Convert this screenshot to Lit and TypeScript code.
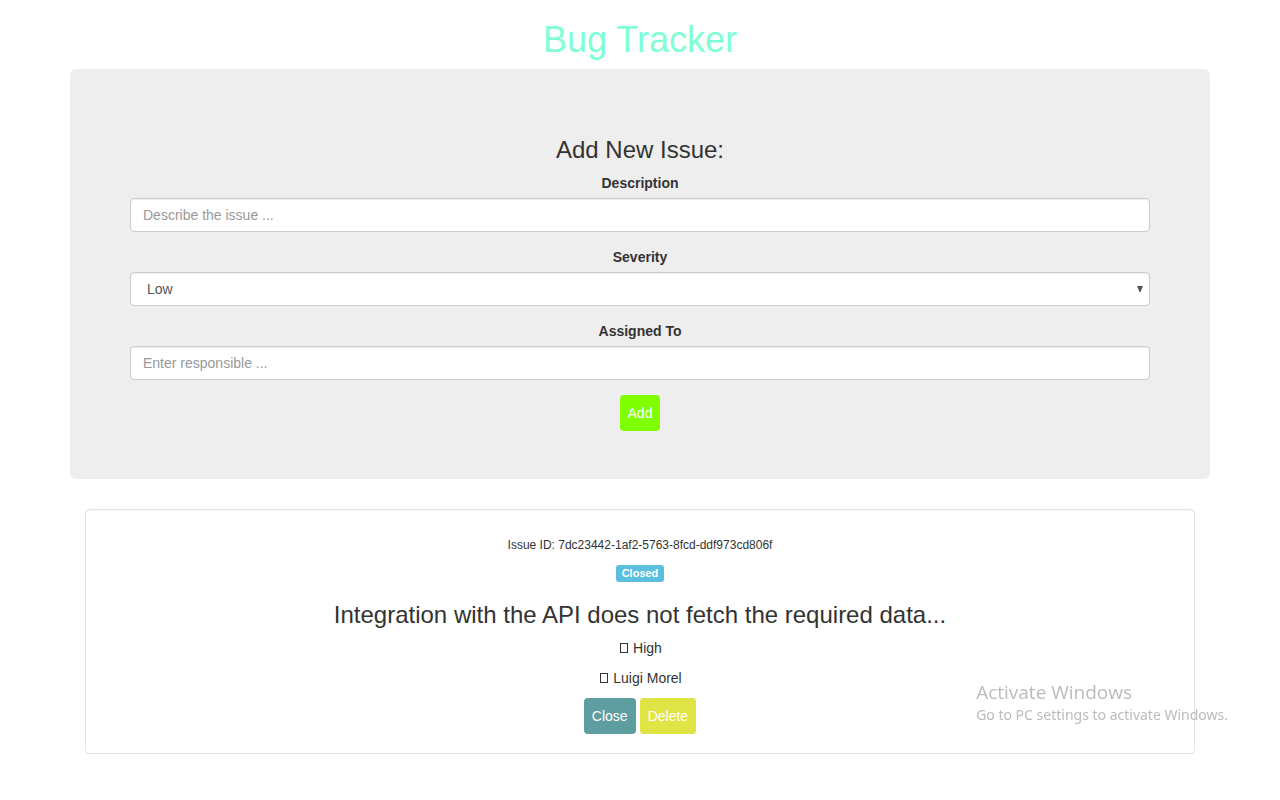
import { LitElement, html, css } from "lit";
import { customElement, property, state } from "lit/decorators.js";

interface Issue {
  id: string;
  description: string;
  severity: string;
  assignedTo: string;
  status: string;
}

const shared = css`
  :host {
    display: block;
  }
  * {
    box-sizing: border-box;
  }
  .btn {
    display: inline-block;
    padding: 7px;
    border: 1px solid transparent;
    border-radius: 4px;
    font-family: inherit;
    font-size: 14px;
    line-height: 20px;
    color: #fff;
    cursor: pointer;
  }
  .heading {
    margin: 20px 0 10px;
    font-size: 24px;
    font-weight: 400;
    line-height: 26px;
  }
`;

@customElement("issue-form")
export class IssueForm extends LitElement {
  static styles = [
    shared,
    css`
      .panel {
        margin-bottom: 30px;
        padding: 48px 60px;
        border-radius: 6px;
        background: #eee;
        display: flow-root;
      }
      .group {
        margin-bottom: 15px;
      }
      .label {
        display: block;
        margin-bottom: 5px;
        font-weight: 700;
      }
      .control {
        display: block;
        width: 100%;
        height: 34px;
        padding: 6px 12px;
        border: 1px solid #ccc;
        border-radius: 4px;
        background: #fff;
        box-shadow: inset 0 1px 1px rgba(0, 0, 0, 0.075);
        color: #555;
        font-family: inherit;
        font-size: 14px;
        line-height: 20px;
      }
      .control::placeholder {
        color: #999;
        opacity: 1;
      }
      .select-wrap {
        position: relative;
      }
      .select {
        appearance: none;
        padding-left: 16px;
      }
      .arrow {
        position: absolute;
        top: 14px;
        right: 7px;
        pointer-events: none;
      }
      .add {
        background: chartreuse;
      }
      .actions {
        display: flex;
        justify-content: center;
      }
    `,
  ];

  private submit(e: Event) {
    e.preventDefault();
    const form = e.target as HTMLFormElement;
    const data = new FormData(form);
    this.dispatchEvent(
      new CustomEvent("add-issue", {
        detail: {
          description: data.get("description"),
          severity: data.get("severity"),
          assignedTo: data.get("assignedTo"),
        },
      })
    );
    form.reset();
  }

  render() {
    return html`
      <section class="panel">
        <h3 class="heading">Add New Issue:</h3>
        <form @submit=${this.submit}>
          <div class="group">
            <label class="label" for="description">Description</label>
            <input class="control" id="description" name="description" type="text" placeholder="Describe the issue ..." />
          </div>
          <div class="group">
            <label class="label" for="severity">Severity</label>
            <div class="select-wrap">
              <select class="control select" id="severity" name="severity">
                <option>Low</option>
                <option>Medium</option>
                <option>High</option>
              </select>
              <svg class="arrow" width="6" height="6" viewBox="0 0 6 6" aria-hidden="true">
                <path d="M0 0H6L3.5 6H2.5Z" fill="#555" />
              </svg>
            </div>
          </div>
          <div class="group">
            <label class="label" for="assigned">Assigned To</label>
            <input class="control" id="assigned" name="assignedTo" type="text" placeholder="Enter responsible ..." />
          </div>
          <div class="actions"><button class="btn add" type="submit">Add</button></div>
        </form>
      </section>
    `;
  }
}

@customElement("issue-card")
export class IssueCard extends LitElement {
  @property({ attribute: false }) issue!: Issue;

  static styles = [
    shared,
    css`
      .card {
        display: flow-root;
        margin-bottom: 20px;
        padding: 19px;
        border: 1px solid #e3e3e3;
        border-radius: 4px;
        box-shadow: inset 0 1px 1px rgba(0, 0, 0, 0.05);
      }
      .id {
        margin: 10px 0;
        font-size: 12px;
        font-weight: 400;
        line-height: 13px;
      }
      .line {
        display: flex;
        justify-content: center;
        align-items: center;
        height: 20px;
        margin: 0 0 10px;
        gap: 5px;
      }
      .badge-line {
        align-items: flex-end;
      }
      .status {
        padding: 3px 6px;
        border-radius: 3px;
        background: #5bc0de;
        color: #fff;
        font-size: 11px;
        font-weight: 700;
        line-height: 11px;
      }
      .actions {
        display: flex;
        justify-content: center;
        gap: 4px;
      }
      .close {
        background: cadetblue;
      }
      .delete {
        background: #e0e444;
      }
    `,
  ];

  private glyph() {
    return html`<svg width="10" height="10" viewBox="0 0 10 10" aria-hidden="true">
      <rect x="2.5" y="0.5" width="7" height="9" fill="none" stroke="#333" />
    </svg>`;
  }

  private emit(name: string) {
    this.dispatchEvent(new CustomEvent(name, { detail: this.issue.id }));
  }

  render() {
    const { id, status, description, severity, assignedTo } = this.issue;
    return html`
      <article class="card">
        <h6 class="id">Issue ID: ${id}</h6>
        <p class="line badge-line"><span class="status">${status}</span></p>
        <h3 class="heading">${description}</h3>
        <p class="line">${this.glyph()}<span>${severity}</span></p>
        <p class="line">${this.glyph()}<span>${assignedTo}</span></p>
        <div class="actions">
          <button class="btn close" type="button" @click=${() => this.emit("close-issue")}>Close</button>
          <button class="btn delete" type="button" @click=${() => this.emit("delete-issue")}>Delete</button>
        </div>
      </article>
    `;
  }
}

@customElement("app-root")
export class AppRoot extends LitElement {
  @state() private issues: Issue[] = [
    {
      id: "7dc23442-1af2-5763-8fcd-ddf973cd806f",
      description: "Integration with the API does not fetch the required data...",
      severity: "High",
      assignedTo: "Luigi Morel",
      status: "Closed",
    },
  ];

  static styles = css`
    :host {
      display: block;
      min-height: 100vh;
      background: #fff;
      color: #333;
      font-family: "Liberation Sans", Arial, sans-serif;
      font-size: 14px;
      line-height: 20px;
      text-align: center;
    }
    .container {
      display: flow-root;
      box-sizing: border-box;
      max-width: 1170px;
      margin: 0 auto;
      padding: 0 15px;
    }
    .title {
      margin: 20px 0 10px;
      color: aquamarine;
      font-size: 36px;
      font-weight: 400;
      line-height: 39px;
    }
    .list {
      padding: 0 15px;
    }
    .watermark {
      position: fixed;
      right: 52px;
      bottom: 75px;
      color: rgba(120, 120, 120, 0.5);
      font-family: "Segoe UI", "Noto Sans", sans-serif;
      text-align: left;
      pointer-events: none;
    }
    .watermark-title {
      font-family: "Segoe UI", "Open Sans", sans-serif;
      font-size: 19px;
      line-height: 26px;
    }
    .watermark-text {
      font-size: 14px;
      line-height: 20px;
    }
  `;

  private add(e: CustomEvent) {
    this.issues = [...this.issues, { ...e.detail, id: crypto.randomUUID(), status: "Open" }];
  }

  private close(e: CustomEvent) {
    this.issues = this.issues.map((i) => (i.id === e.detail ? { ...i, status: "Closed" } : i));
  }

  private remove(e: CustomEvent) {
    this.issues = this.issues.filter((i) => i.id !== e.detail);
  }

  render() {
    return html`
      <main class="container">
        <h1 class="title">Bug Tracker</h1>
        <issue-form @add-issue=${this.add}></issue-form>
        <div class="list">
          ${this.issues.map(
            (issue) => html`<issue-card
              .issue=${issue}
              @close-issue=${this.close}
              @delete-issue=${this.remove}
            ></issue-card>`
          )}
        </div>
      </main>
      <aside class="watermark">
        <div class="watermark-title">Activate Windows</div>
        <div class="watermark-text">Go to PC settings to activate Windows.</div>
      </aside>
    `;
  }
}
